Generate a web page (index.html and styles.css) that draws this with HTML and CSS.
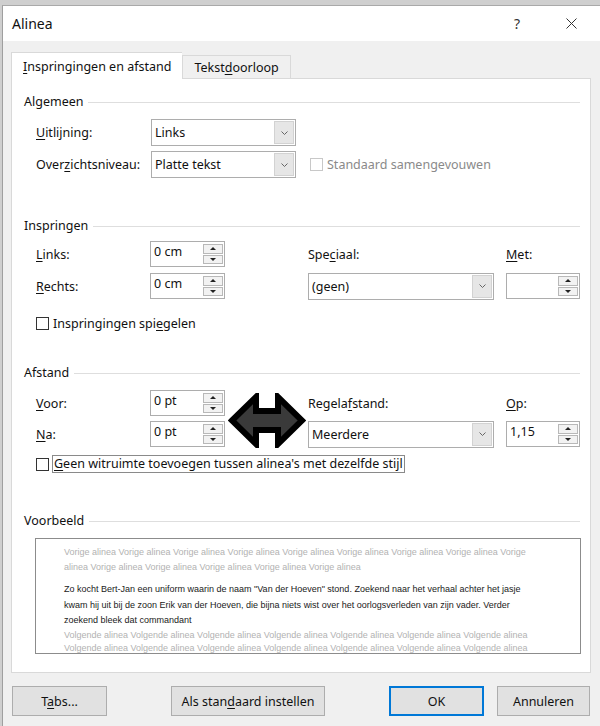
FILE: index.html
```html
<!DOCTYPE html>
<html lang="nl">
<head>
    <meta charset="UTF-8">
    <meta name="viewport" content="width=device-width, initial-scale=1.0">
    <title>Alinea</title>
    <link rel="stylesheet" href="styles.css">
</head>
<body>
    <div class="window">
        <div class="titlebar">
            <span class="title">Alinea</span>
            <span class="help">?</span>
            <svg class="close" viewBox="0 0 11 11">
                <path d="M0.5 0.5 L10.5 10.5 M10.5 0.5 L0.5 10.5" stroke="#333" stroke-width="1" fill="none"/>
            </svg>
        </div>

        <div class="content">
            <div class="tabs">
                <div class="tab active"><u>I</u>nspringingen en afstand</div>
                <div class="tab">Tekst<u>d</u>oorloop</div>
            </div>

            <div class="panel">
                <!-- Algemeen -->
                <div class="group-title">Algemeen</div>
                <div class="row row-first">
                    <span class="label"><u>U</u>itlijning:</span>
                    <div class="combo combo-short">
                        <span class="combo-value">Links</span>
                        <span class="combo-btn"><svg width="7" height="4" viewBox="0 0 7 4"><path d="M0.5 0.5 L3.5 3.5 L6.5 0.5" stroke="#666" fill="none"/></svg></span>
                    </div>
                </div>
                <div class="row row-second">
                    <span class="label">Over<u>z</u>ichtsniveau:</span>
                    <div class="combo combo-short">
                        <span class="combo-value">Platte tekst</span>
                        <span class="combo-btn"><svg width="7" height="4" viewBox="0 0 7 4"><path d="M0.5 0.5 L3.5 3.5 L6.5 0.5" stroke="#666" fill="none"/></svg></span>
                    </div>
                    <span class="check disabled check-collapsed"></span>
                    <span class="check-text disabled-text">Standaard samengevouwen</span>
                </div>

                <!-- Inspringen -->
                <div class="group-title group-gap">Inspringen</div>
                <div class="grid grid-indent">
                    <span class="label"><u>L</u>inks:</span>
                    <div class="spin">
                        <span class="spin-value">0 cm</span>
                        <span class="spin-btns"><span class="spin-btn up"></span><span class="spin-btn down"></span></span>
                    </div>
                    <span class="label col-special">Spe<u>c</u>iaal:</span>
                    <span class="label col-by"><u>M</u>et:</span>

                    <span class="label"><u>R</u>echts:</span>
                    <div class="spin">
                        <span class="spin-value">0 cm</span>
                        <span class="spin-btns"><span class="spin-btn up"></span><span class="spin-btn down"></span></span>
                    </div>
                    <div class="combo col-special">
                        <span class="combo-value">(geen)</span>
                        <span class="combo-btn"><svg width="7" height="4" viewBox="0 0 7 4"><path d="M0.5 0.5 L3.5 3.5 L6.5 0.5" stroke="#666" fill="none"/></svg></span>
                    </div>
                    <div class="spin col-by">
                        <span class="spin-value"></span>
                        <span class="spin-btns"><span class="spin-btn up"></span><span class="spin-btn down"></span></span>
                    </div>
                </div>
                <div class="check-row check-mirror">
                    <span class="check"></span>
                    <span class="check-text">Inspringingen spi<u>e</u>gelen</span>
                </div>

                <!-- Afstand -->
                <div class="group-title group-gap-small">Afstand</div>
                <div class="grid grid-spacing">
                    <span class="label"><u>V</u>oor:</span>
                    <div class="spin">
                        <span class="spin-value">0 pt</span>
                        <span class="spin-btns"><span class="spin-btn up"></span><span class="spin-btn down"></span></span>
                    </div>
                    <svg class="arrow" width="78" height="55" viewBox="0 0 78 55">
                        <polygon points="4,27.5 28,4 28,18 50,18 50,4 74,27.5 50,51 50,37 28,37 28,51" fill="#3a3a3a" stroke="#000" stroke-width="6" stroke-linejoin="miter"/>
                    </svg>
                    <span class="label col-special">Regela<u>f</u>stand:</span>
                    <span class="label col-by"><u>O</u>p:</span>

                    <span class="label"><u>N</u>a:</span>
                    <div class="spin">
                        <span class="spin-value">0 pt</span>
                        <span class="spin-btns"><span class="spin-btn up"></span><span class="spin-btn down"></span></span>
                    </div>
                    <div class="combo col-special">
                        <span class="combo-value">Meerdere</span>
                        <span class="combo-btn"><svg width="7" height="4" viewBox="0 0 7 4"><path d="M0.5 0.5 L3.5 3.5 L6.5 0.5" stroke="#666" fill="none"/></svg></span>
                    </div>
                    <div class="spin col-by">
                        <span class="spin-value">1,15</span>
                        <span class="spin-btns"><span class="spin-btn up"></span><span class="spin-btn down"></span></span>
                    </div>
                </div>
                <div class="check-row check-space">
                    <span class="check"></span>
                    <span class="check-text focused"><u>G</u>een witruimte toevoegen tussen alinea's met dezelfde stijl</span>
                </div>

                <!-- Voorbeeld -->
                <div class="group-title group-gap">Voorbeeld</div>
                <div class="preview">
                    <p class="prev-para">Vorige alinea Vorige alinea Vorige alinea Vorige alinea Vorige alinea Vorige alinea Vorige alinea Vorige alinea Vorige<br>alinea Vorige alinea Vorige alinea Vorige alinea Vorige alinea Vorige alinea</p>
                    <p class="cur-para">Zo kocht Bert-Jan een uniform waarin de naam "Van der Hoeven" stond. Zoekend naar het verhaal achter het jasje<br>kwam hij uit bij de zoon Erik van der Hoeven, die bijna niets wist over het oorlogsverleden van zijn vader. Verder<br>zoekend bleek dat commandant</p>
                    <p class="next-para">Volgende alinea Volgende alinea Volgende alinea Volgende alinea Volgende alinea Volgende alinea Volgende alinea<br>Volgende alinea Volgende alinea Volgende alinea Volgende alinea Volgende alinea Volgende alinea Volgende alinea</p>
                </div>
            </div>

            <div class="buttons">
                <button class="btn btn-tabs">T<u>a</u>bs...</button>
                <button class="btn btn-default">Als stan<u>d</u>aard instellen</button>
                <button class="btn btn-ok">OK</button>
                <button class="btn btn-cancel">Annuleren</button>
            </div>
        </div>
    </div>
</body>
</html>
```

FILE: styles.css
```css
* {
    margin: 0;
    padding: 0;
    box-sizing: border-box;
}
body {
    font-family: "Noto Sans", "Segoe UI", sans-serif;
    font-size: 12px;
    color: #111;
    background-color: #cfcfcf;
    padding: 5px 0 0 2px;
    overflow: hidden;
}
u {
    text-decoration-thickness: 1px;
    text-underline-offset: 2px;
}
.window {
    height: 721px;
    background-color: #f0f0f0;
    border-left: 1px solid #9f9f9f;
    border-top: 1px solid #a9a9a9;
}
.titlebar {
    height: 35px;
    background-color: #fff;
    display: flex;
    align-items: center;
    padding-left: 9px;
}
.title {
    flex: 1;
    font-size: 14px;
}
.help {
    font-size: 14px;
    color: #333;
    margin-right: 46px;
}
.close {
    width: 11px;
    height: 11px;
    margin-right: 23px;
}
.content {
    padding: 11px 9px 0 8px;
}
.tabs {
    display: flex;
    align-items: flex-end;
    height: 26px;
}
.tab {
    height: 23px;
    padding: 0 11px;
    display: flex;
    align-items: center;
    background-color: #f0f0f0;
    border: 1px solid #d9d9d9;
    border-bottom: none;
    font-size: 12.5px;
}
.tab.active {
    position: relative;
    height: 27px;
    margin-bottom: -1px;
    padding: 0 11px;
    background-color: #fff;
    border-right: none;
}
.panel {
    height: 595px;
    background-color: #fff;
    border: 1px solid #d9d9d9;
    padding: 14px 10px 0 12px;
}
.group-title {
    display: flex;
    align-items: center;
    gap: 5px;
    height: 16px;
    font-size: 12.5px;
}
.group-title::after {
    content: "";
    flex: 1;
    height: 1px;
    margin-top: 2px;
    background-color: #dedede;
}
.group-gap {
    margin-top: 39px;
}
.group-gap-small {
    margin-top: 32px;
}
.label {
    font-size: 12.5px;
    white-space: nowrap;
}
.row {
    display: flex;
    align-items: center;
    height: 27px;
    margin-left: 12px;
}
.row .label {
    width: 115px;
}
.row-first {
    margin-top: 10px;
}
.row-second {
    margin-top: 5px;
}
.combo {
    display: flex;
    align-items: stretch;
    height: 27px;
    background-color: #fff;
    border: 1px solid #adadad;
    font-size: 12.5px;
}
.combo-short {
    width: 145px;
}
.combo-value {
    flex: 1;
    padding-left: 3px;
    display: flex;
    align-items: center;
}
.combo-btn {
    width: 20px;
    margin: 1px;
    background-color: #e6e6e6;
    border: 1px solid #d2d2d2;
    display: flex;
    align-items: center;
    justify-content: center;
}
.check {
    width: 13px;
    height: 13px;
    border: 1px solid #333;
    background-color: #fff;
    flex-shrink: 0;
}
.check.disabled {
    border-color: #c8c8c8;
}
.check-collapsed {
    margin-left: 14px;
}
.check-text {
    margin-left: 4px;
    font-size: 12.5px;
    white-space: nowrap;
}
.disabled-text {
    color: #8a8a8a;
}
.grid {
    display: grid;
    grid-template-columns: 114px 75px 83px 186px 12px 74px;
    align-items: center;
    margin-left: 12px;
}
.grid-indent {
    margin-top: 8px;
    grid-template-rows: 26px 26px;
    row-gap: 6px;
}
.grid-spacing {
    margin-top: 10px;
    grid-template-rows: 26px 26px;
    row-gap: 5px;
}
.col-special {
    grid-column: 4;
}
.col-by {
    grid-column: 6;
}
.arrow {
    grid-column: 3;
    grid-row: 1 / span 2;
    justify-self: center;
    margin-top: 3px;
}
.spin {
    display: flex;
    height: 26px;
    background-color: #fff;
    border: 1px solid #adadad;
    padding: 2px 1px 2px 3px;
    font-size: 12.5px;
}
.grid .combo {
    height: 27px;
}
.spin-value {
    flex: 1;
    line-height: 16px;
}
.spin-btns {
    width: 20px;
    display: flex;
    flex-direction: column;
    gap: 1px;
}
.spin-btn {
    flex: 1;
    background-color: #f2f2f2;
    border: 1px solid #b8b8b8;
    display: flex;
    align-items: center;
    justify-content: center;
}
.spin-btn::before {
    content: "";
    border-left: 3px solid transparent;
    border-right: 3px solid transparent;
}
.spin-btn.up::before {
    border-bottom: 3px solid #222;
}
.spin-btn.down::before {
    border-top: 3px solid #222;
}
.check-row {
    display: flex;
    align-items: center;
    height: 18px;
    margin-left: 12px;
}
.check-mirror {
    margin-top: 15px;
}
.check-space {
    margin-top: 8px;
}
.focused {
    margin-left: 3px;
    padding: 0 1px;
    border: 1px solid #8a8a8a;
    line-height: 16px;
}
.preview {
    margin: 10px 0 0 11px;
    width: 546px;
    height: 116px;
    border: 1px solid #8c8c8c;
    background-color: #fff;
    padding: 6px 0 0 28px;
    overflow: hidden;
    white-space: nowrap;
    font-family: "Liberation Sans Narrow", "Liberation Sans", sans-serif;
    font-size: 9px;
}
.prev-para {
    color: #b2b2b2;
    line-height: 15px;
}
.cur-para {
    color: #1a1a1a;
    line-height: 15.5px;
    margin-top: 7px;
}
.next-para {
    color: #b2b2b2;
    line-height: 13.5px;
}
.buttons {
    display: flex;
    margin-top: 13px;
    padding: 0 1px;
}
.btn {
    height: 30px;
    background-color: #e1e1e1;
    border: 1px solid #adadad;
    font-family: "Noto Sans", "Segoe UI", sans-serif;
    font-size: 12.5px;
    color: #111;
}
.btn-tabs {
    width: 95px;
}
.btn-default {
    width: 154px;
    margin-left: 64px;
}
.btn-ok {
    width: 95px;
    margin-left: auto;
    border: 2px solid #0078d7;
}
.btn-cancel {
    width: 93px;
    margin-left: 13px;
}
```
